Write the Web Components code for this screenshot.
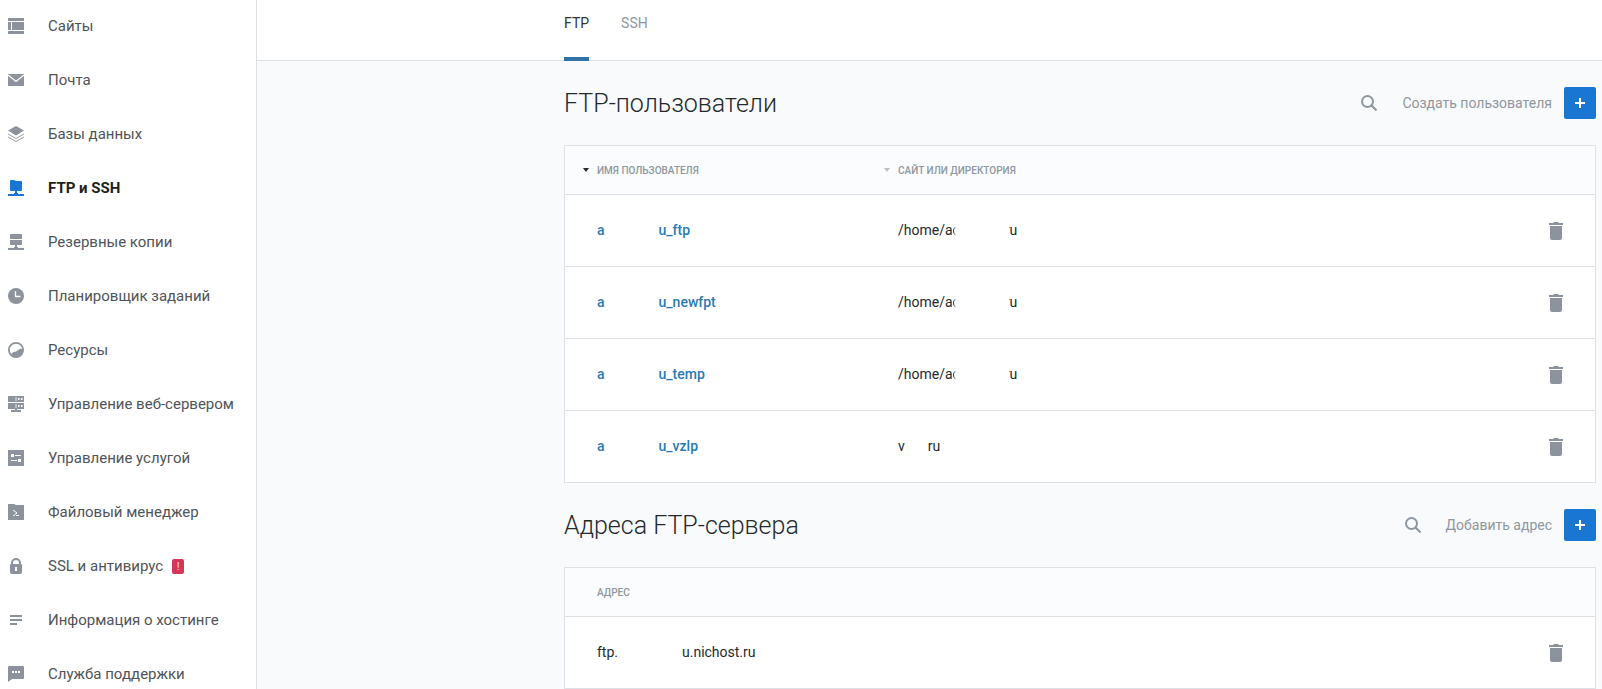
<!DOCTYPE html>
<html lang="ru">
<head>
<meta charset="utf-8">
<meta name="viewport" content="width=device-width, initial-scale=1">
<title>FTP и SSH</title>
<style>
body {
    margin: 0;
    font-family: Roboto, "Liberation Sans", sans-serif;
    font-size: 14px;
    color: #24292d;
    --line: #dde1e5;
    --muted: #8e979f;
    --icon: #8c939c;
    --blue: #1976d2;
}
</style>
</head>
<body>
<hosting-panel>
    <side-nav slot="nav"></side-nav>
    <tab-bar slot="tabs"></tab-bar>
    <data-section id="users" heading="FTP-пользователи" action="Создать пользователя"></data-section>
    <data-section id="addresses" heading="Адреса FTP-сервера" action="Добавить адрес"></data-section>
</hosting-panel>

<script>
const icons = {
    sites: '<path d="M0 0h16v3H0zM0 4h3v8H0zM4 4h12v8H4zM0 13h16v3H0z"/>',
    mail: '<path d="M0 2h16v12H0z"/><path d="M0 3l8 6.500L16 3" fill="none" stroke="#fff" stroke-width="1.300"/>',
    layers: '<path d="M8 0l8 4.500L8 9.500 0 4.500z"/><path d="M0 8l8 4.500L16 8M0 11l8 4.500 8-4.500" fill="none" stroke="currentColor" stroke-width=".9"/>',
    ftp: '<path d="M2 1q0-1 1-1h3l2 1h5q1 0 1 1v8q0 1-1 1H3q-1 0-1-1zM7 11h2v2H7zM0 14h6v-1h4v1h6v2H0z"/>',
    backup: '<path d="M3 0h10q1 0 1 1v4H2V1q0-1 1-1zM2 6h12v4q0 1-1 1H3q-1 0-1-1zM7 11h2v2H7zM0 14h6v-1h4v1h6v2H0z"/>',
    clock: '<circle cx="8" cy="8" r="8"/><path d="M7.500 3v5.500H12.500" fill="none" stroke="#fff" stroke-width="1.300"/>',
    gauge: '<circle cx="8" cy="8" r="7.100" fill="none" stroke="currentColor" stroke-width="1.800"/><path d="M3 13c1-3 3-3 5-3.500S11 6 15 7l-2 6-5 2z"/>',
    server: '<path d="M0 0h16v6H0zM0 7h16v6H0zM7 13h2v1h4v2H3v-2h4z"/><path d="M10 2h1.500v2H10zM13 2h1.500v2H13zM10 9h1.500v2H10zM13 9h1.500v2H13z" fill="#fff"/><path d="M8 1v4M8 8v4" stroke="#fff" stroke-width=".8"/>',
    service: '<path d="M0 0h16v16H0z"/><path d="M3 4h3v3H3zM7 5h6v1H7zM3 10h6v1H3zM10 9h3v3h-3z" fill="#fff"/>',
    files: '<path d="M0 0h6l2 1h8v15H0z"/><path d="M5 6l4 3-4 3M8 11.500h3" fill="none" stroke="#fff"/>',
    lock: '<path d="M4 7V5a4 4 0 0 1 8 0v2" fill="none" stroke="currentColor" stroke-width="2"/><path d="M3 6h10q1 0 1 1v7q0 2-2 2H4q-2 0-2-2V7q0-1 1-1z"/><path d="M7 9h2v4H7z" fill="#fff"/>',
    info: '<path d="M2 3h12v2H2zM2 7h12v2H2zM2 11h7v2H2z"/>',
    support: '<path d="M1 0h14q1 0 1 1v11q0 1-1 1H4l-4 3V1q0-1 1-1z"/><path d="M4 5h2v2H4zM7 5h2v2H7zM10 5h2v2h-2z" fill="#fff"/>',
    search: '<circle cx="6.500" cy="6.500" r="5.500" fill="none" stroke="currentColor" stroke-width="2"/><path d="M10.500 10.500l5 5" stroke="currentColor" stroke-width="2"/>',
    plus: '<path d="M7 3h2v4h4v2H9v4H7V9H3V7h4z"/>',
    trash: '<path d="M1 1h4l1-1h4l1 1h4v2H1zM2 4h12v12q0 2-2 2H4q-2 0-2-2z"/>'
};

class PanelIcon extends HTMLElement {
    constructor() {
        super();
        this.attachShadow({ mode: "open" });
    }

    connectedCallback() {
        const name = this.getAttribute("name");
        const height = name === "trash" ? 18 : 16;
        this.shadowRoot.innerHTML = `
        <style>
        :host { display: block; flex: none; }
        svg { display: block; fill: currentColor; }
        </style>
        <svg width="16" height="${height}" viewBox="0 0 16 ${height}" aria-hidden="true">${icons[name]}</svg>`;
    }
}

class HostingPanel extends HTMLElement {
    constructor() {
        super();
        this.attachShadow({ mode: "open" }).innerHTML = `
        <style>
        :host { display: flex; height: 100vh; background: #f9fafc; }
        .page { display: flex; flex-direction: column; flex: 1; min-width: 0; overflow-y: auto; scrollbar-width: none; }
        main { padding: 0 6px 0 307px; }
        </style>
        <slot name="nav"></slot>
        <div class="page">
            <slot name="tabs"></slot>
            <main><slot></slot></main>
        </div>`;
    }
}

class SideNav extends HTMLElement {
    constructor() {
        super();
        this.attachShadow({ mode: "open" });
        this.items = [
            { icon: "sites", text: "Сайты" },
            { icon: "mail", text: "Почта" },
            { icon: "layers", text: "Базы данных" },
            { icon: "ftp", text: "FTP и SSH", active: true },
            { icon: "backup", text: "Резервные копии" },
            { icon: "clock", text: "Планировщик заданий" },
            { icon: "gauge", text: "Ресурсы" },
            { icon: "server", text: "Управление веб-сервером" },
            { icon: "service", text: "Управление услугой" },
            { icon: "files", text: "Файловый менеджер" },
            { icon: "lock", text: "SSL и антивирус", badge: "!" },
            { icon: "info", text: "Информация о хостинге" },
            { icon: "support", text: "Служба поддержки" }
        ];
    }

    connectedCallback() {
        this.shadowRoot.innerHTML = `
        <style>
        :host {
            display: block;
            flex: none;
            width: 256px;
            overflow-y: auto;
            scrollbar-width: none;
            background: #fff;
            border-right: 1px solid var(--line);
        }
        nav { display: flex; flex-direction: column; gap: 2px; }
        a {
            display: flex;
            align-items: center;
            height: 52px;
            padding-left: 8px;
            font-size: 15px;
            color: #505458;
            text-decoration: none;
            white-space: nowrap;
        }
        panel-icon { margin-right: 24px; color: var(--icon); }
        .active { color: #1c1f21; font-weight: 700; }
        .active panel-icon { color: var(--blue); }
        .badge {
            width: 12px;
            margin-left: 9px;
            border-radius: 2px;
            background: #d5365a;
            color: #fbd5dd;
            font-size: 11px;
            line-height: 15px;
            text-align: center;
        }
        </style>
        <nav>${this.items.map(item => `
            <a href="#" ${item.active ? 'class="active" aria-current="page"' : ""}>
                <panel-icon name="${item.icon}"></panel-icon>
                <span>${item.text}</span>
                ${item.badge ? `<span class="badge">${item.badge}</span>` : ""}
            </a>`).join("")}
        </nav>`;
    }
}

class TabBar extends HTMLElement {
    constructor() {
        super();
        this.attachShadow({ mode: "open" }).innerHTML = `
        <style>
        :host { display: block; flex: none; background: #fff; border-bottom: 1px solid var(--line); }
        nav { display: flex; gap: 32px; padding-left: 307px; }
        a {
            margin-bottom: -1px;
            padding: 12px 0 23px;
            border-bottom: 4px solid transparent;
            color: var(--muted);
            line-height: 22px;
            text-decoration: none;
        }
        a.active { color: #303538; border-color: #2d73a8; }
        </style>
        <nav>
            <a class="active" href="#ftp" aria-current="page">FTP</a>
            <a href="#ssh">SSH</a>
        </nav>`;
    }
}

class DataSection extends HTMLElement {
    constructor() {
        super();
        this.attachShadow({ mode: "open" });
    }

    set data(data) {
        this._data = data;
        this.render();
    }

    render() {
        const { columns, rows } = this._data;
        const heading = this.getAttribute("heading");
        const action = this.getAttribute("action");
        this.shadowRoot.innerHTML = `
        <style>
        :host { display: block; padding-top: 26px; }
        header { display: flex; align-items: center; height: 32px; margin-bottom: 26px; }
        h2 { flex: 1; margin: 0; padding-top: 2px; font-size: 25px; font-weight: 300; line-height: 32px; }
        button {
            display: flex;
            align-items: center;
            padding: 0;
            border: 0;
            background: none;
            font: inherit;
            color: var(--muted);
            cursor: pointer;
        }
        .search { margin-right: 25px; }
        .create { gap: 12px; }
        .plus {
            padding: 8px;
            border-radius: 2px;
            background: var(--blue);
            color: #fff;
        }
        table {
            width: 100%;
            table-layout: fixed;
            border: 1px solid var(--line);
            border-spacing: 0;
            background: #fff;
        }
        th, td { padding: 0 0 0 32px; text-align: left; border-bottom: 1px solid var(--line); }
        tbody tr:last-child td { border-bottom: 0; }
        th {
            height: 48px;
            background: #fbfcfd;
            color: var(--muted);
            font-size: 10px;
            font-weight: 500;
            text-transform: uppercase;
        }
        td { height: 69px; padding-bottom: 2px; }
        .name { width: 269px; }
        .tools { width: 32px; padding: 0 31px 0 0; }
        .tools button { margin-left: auto; color: var(--icon); }
        th.sortable { padding-left: 18px; }
        th.name.sortable { width: 283px; }
        th button { gap: 8px; font: inherit; text-transform: inherit; }
        th button::before {
            content: "";
            border: 3px solid transparent;
            border-top: 4px solid #b9c0c5;
            border-bottom: 0;
        }
        th.sorted button::before { border-top-color: #24292d; }
        a { color: #2a7bb5; font-weight: 500; text-decoration: none; }
        /* hidden part of a name */
        .gap { display: inline-block; width: 54px; }
        .gap.s { width: 23px; }
        .gap.l { width: 64px; }
        /* traces of the letters at both ends of the hidden part */
        .gap.trace {
            box-sizing: border-box;
            width: 57px;
            height: 8px;
            border-left: 1px solid #3c4145;
            border-radius: 4px 0 0 4px;
            background: linear-gradient(#8e9295, #8e9295) 100% 0 / 1px 1px no-repeat;
        }
        </style>
        <header>
            <h2>${heading}</h2>
            <button class="search" type="button" aria-label="Поиск"><panel-icon name="search"></panel-icon></button>
            <button class="create" type="button">${action}<span class="plus"><panel-icon name="plus"></panel-icon></span></button>
        </header>
        <table>
            <thead>
                <tr>
                    ${columns.map((column, i) => `<th scope="col" class="${i === 0 ? "name" : ""} ${column.sort ? "sortable" : ""} ${column.sort === "on" ? "sorted" : ""}">${column.sort ? `<button type="button">${column.title}</button>` : column.title}</th>`).join("")}
                    <th class="tools"></th>
                </tr>
            </thead>
            <tbody>
                ${rows.map(row => `
                <tr>
                    ${row.map(cell => `<td>${cell}</td>`).join("")}
                    <td class="tools"><button type="button" aria-label="Удалить"><panel-icon name="trash"></panel-icon></button></td>
                </tr>`).join("")}
            </tbody>
        </table>`;
    }
}

customElements.define("panel-icon", PanelIcon);
customElements.define("hosting-panel", HostingPanel);
customElements.define("side-nav", SideNav);
customElements.define("tab-bar", TabBar);
customElements.define("data-section", DataSection);

const user = name => `<a href="#">a<span class="gap"></span>${name}</a>`;
const home = '/home/a<span class="gap trace"></span>u';

document.querySelector("#users").data = {
    columns: [
        { title: "Имя пользователя", sort: "on" },
        { title: "Сайт или директория", sort: "off" }
    ],
    rows: [
        [user("u_ftp"), home],
        [user("u_newfpt"), home],
        [user("u_temp"), home],
        [user("u_vzlp"), 'v<span class="gap s"></span>ru']
    ]
};

document.querySelector("#addresses").data = {
    columns: [{ title: "Адрес" }],
    rows: [['ftp.<span class="gap l"></span>u.nichost.ru']]
};
</script>
</body>
</html>
